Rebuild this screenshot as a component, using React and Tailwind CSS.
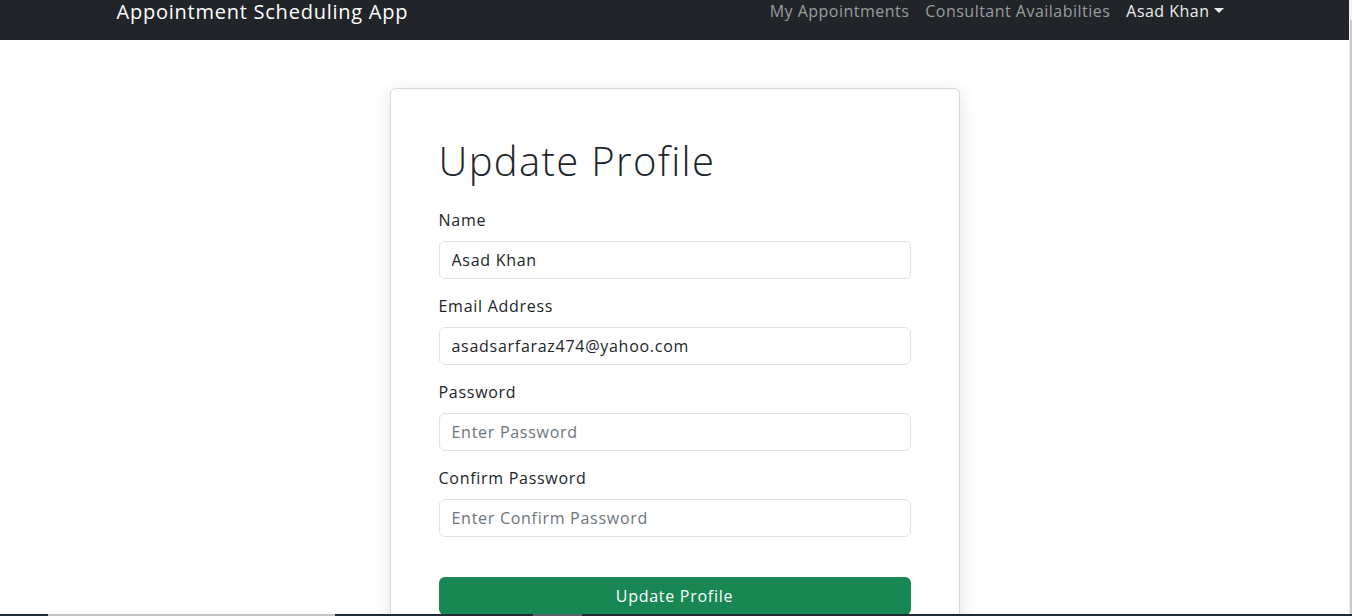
import React from "react";

const font = { fontFamily: '"Open Sans", "Noto Sans", sans-serif' };

function Field({ label, value, placeholder, type = "text", last }) {
  return (
    <div className={last ? "" : "mb-[15px]"}>
      <label className="block text-[16px] leading-[24px] tracking-[0.045em] text-[#212529] mb-[9px]">{label}</label>
      <input
        type={type}
        defaultValue={value}
        placeholder={placeholder}
        className="block w-full h-[38px] px-3 pb-[1px] text-[16px] tracking-[0.045em] text-[#212529] bg-white border border-[#dee2e6] rounded-[6px] outline-none placeholder:text-[#6c757d]"
      />
    </div>
  );
}

function Caret() {
  return (
    <span className="inline-block ml-[4px] align-[4px] w-0 h-0 border-t-[5px] border-t-current border-x-[5px] border-x-transparent" />
  );
}

export default function App() {
  return (
    <div className="relative flex min-h-screen bg-white overflow-hidden" style={font}>
      <div className="flex-1 min-w-0">
        {/* navbar */}
        <nav className="h-[40px] bg-[#212529] overflow-hidden">
          <div className="max-w-[1140px] mx-auto px-3 flex items-start justify-between">
            <a className="mt-[-2px] text-[20px] leading-[28px] tracking-[0.038em] text-white">Appointment Scheduling App</a>
            <ul className="flex mt-[-1px] mr-[1px]">
              <li className="px-2 text-[16px] leading-[24px] tracking-[0.03em] text-[#9a9c9e]">My Appointments</li>
              <li className="px-2 text-[16px] leading-[24px] tracking-[0.03em] text-[#9a9c9e]">Consultant Availabilties</li>
              <li className="px-2 text-[16px] leading-[24px] tracking-[0.03em] text-[#ececec]">
                Asad Khan
                <Caret />
              </li>
            </ul>
          </div>
        </nav>

        {/* profile form card */}
        <div className="mx-auto mt-12 w-[570px] bg-white border border-[#d6d6d6] rounded-[6px] shadow-[0_4px_18px_rgba(0,0,0,0.12)] px-12 pt-12 pb-12">
          <h1 className="text-[40px] leading-[48px] font-light tracking-[0.034em] text-[#212529] mb-6">Update Profile</h1>
          <div className="-mt-[1px]">
            <Field label="Name" value="Asad Khan" />
            <Field label="Email Address" value="asadsarfaraz474@yahoo.com" type="email" />
            <Field label="Password" placeholder="Enter Password" type="password" />
            <Field label="Confirm Password" placeholder="Enter Confirm Password" type="password" last />
          </div>
          <button className="mt-10 w-full h-[38px] pb-[1px] bg-[#198754] text-white text-[16px] tracking-[0.045em] rounded-[6px]">
            Update Profile
          </button>
        </div>
      </div>

      {/* scrollbar edge */}
      <div className="w-[3px] bg-[#f1f1f1] pt-[20px] flex justify-end">
        <div className="w-[2px] h-full bg-[#c9c9c9]" />
      </div>

      {/* taskbar strip */}
      <div className="fixed bottom-0 left-0 right-0 h-[2px] flex bg-[#1f2c34]">
        <div className="w-[48px]" />
        <div className="w-[287px] bg-[#c4c4c4]" />
        <div className="w-[198px]" />
        <div className="w-[49px] bg-[#5c6369]" />
      </div>
    </div>
  );
}
